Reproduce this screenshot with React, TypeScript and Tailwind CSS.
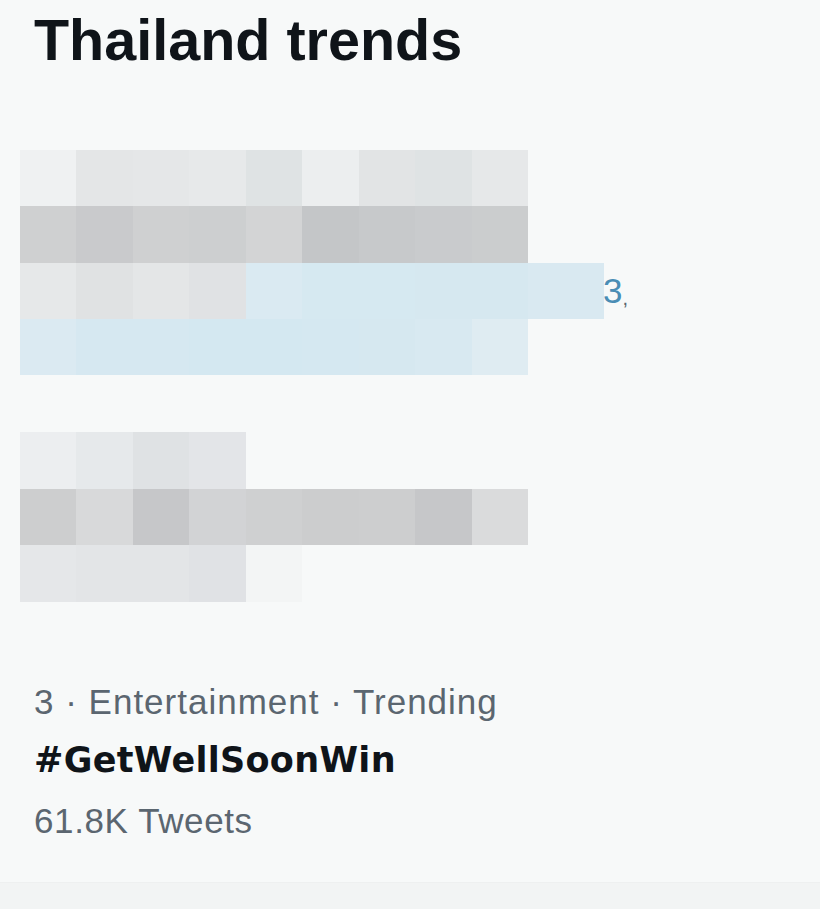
const groupOne: string[][] = [
  ["#eff1f2", "#e4e6e7", "#e5e7e8", "#e7e9ea", "#dfe3e4", "#eceeef", "#e2e4e5", "#dfe3e4", "#e6e8e9"],
  ["#cfd0d1", "#c9cacc", "#cfd0d1", "#cdcfd0", "#d3d4d5", "#c4c6c8", "#c7c9cb", "#c9cbcd", "#cbcdce"],
  ["#e6e8e9", "#e0e2e3", "#e4e6e7", "#e0e2e4", "#daeaf2", "#d6e9f1", "#d6e9f1", "#d6e8f0", "#d6e8f0"],
  ["#dbeaf2", "#d6e8f1", "#d6e8f1", "#d4e8f1", "#d4e8f1", "#d5e8f1", "#d6e8f0", "#d8e9f1", "#dfecf2"],
];

const groupTwo: string[][] = [
  ["#eceef0", "#e6e9eb", "#dfe2e4", "#e3e5e8"],
  ["#cdcecf", "#d8d9da", "#c6c7c9", "#d2d3d5", "#cfd0d1", "#cccdce", "#cdcecf", "#c6c7c9", "#dadbdc"],
  ["#e5e7e9", "#e3e5e7", "#e3e5e7", "#e0e2e5", "#f3f5f5"],
];

function Cells({ colors }: { colors: string[] }) {
  return (
    <>
      {colors.map((c, i) => (
        <div key={i} className="w-[56.45px] h-full shrink-0" style={{ backgroundColor: c }} />
      ))}
    </>
  );
}

export default function App() {
  return (
    <div className="w-[820px] h-[909px] bg-[#f7f9f9] flex flex-col overflow-hidden font-['Liberation_Sans',Arial,sans-serif]">
      {/* Header */}
      <h2 className="pt-[12px] pl-[34px] h-[69px] text-[57.5px] leading-[57px] font-bold text-[#0f1419]">
        Thailand trends
      </h2>

      {/* Redacted trend 1 */}
      <div className="mt-[81px] pl-[20px] flex flex-col">
        <div className="flex h-[56px]">
          <Cells colors={groupOne[0]} />
        </div>
        <div className="flex h-[56.5px]">
          <Cells colors={groupOne[1]} />
        </div>
        <div className="flex h-[56.5px] items-center">
          <Cells colors={groupOne[2]} />
          <div className="w-[76px] h-full bg-[#d9e9f1] shrink-0" />
          <span className="text-[35px] leading-none text-[#4a8db5] -ml-[1px]">3</span>
          <span className="text-[20px] leading-none text-[#5a6670] mt-[14px]">,</span>
        </div>
        <div className="flex h-[56px]">
          <Cells colors={groupOne[3]} />
        </div>
      </div>

      {/* Redacted trend 2 */}
      <div className="mt-[57px] pl-[20px] flex flex-col">
        <div className="flex h-[56.5px]">
          <Cells colors={groupTwo[0]} />
        </div>
        <div className="flex h-[56.5px]">
          <Cells colors={groupTwo[1]} />
        </div>
        <div className="flex h-[56.5px]">
          <Cells colors={groupTwo[2]} />
        </div>
      </div>

      {/* Trend 3 */}
      <div className="mt-[80px] pl-[34px] flex flex-col">
        <div className="text-[35px] leading-[40px] tracking-[1px] text-[#5b6670]">
          3 · Entertainment · Trending
        </div>
        <div className="mt-[16px] h-[44px] text-[35px] leading-[44px] font-bold tracking-[0.3px] text-[#0f1419] font-['DejaVu_Sans',sans-serif]">
          #GetWellSoonWin
        </div>
        <div className="mt-[19px] text-[35px] leading-[40px] tracking-[0.6px] text-[#5b6670]">61.8K Tweets</div>
      </div>

      <div className="mt-auto h-[27px] border-t border-[#eef0f0] bg-[#f2f4f4]" />
    </div>
  );
}
